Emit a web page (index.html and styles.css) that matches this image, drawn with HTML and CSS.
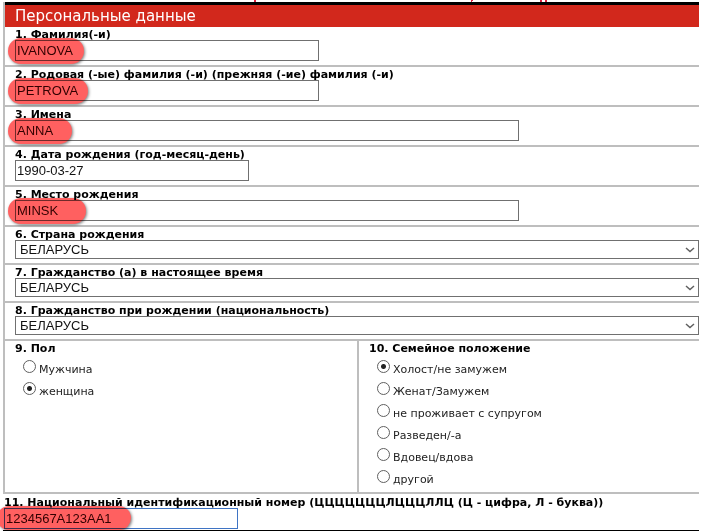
FILE: index.html
```html
<!DOCTYPE html>
<html lang="ru">
<head>
<meta charset="utf-8">
<title>Персональные данные</title>
<link rel="stylesheet" href="styles.css">
</head>
<body>
<svg class="specks" width="709" height="2" viewBox="0 0 709 2" aria-hidden="true">
  <path d="M254 0h2v2h-2zM471 0h2v1h-1v1h-1zM540 0h2v2h-2zM545 0h2v2h-2z"/>
</svg>
<form class="form">
  <section class="panel">
    <h1 class="title">Персональные данные</h1>
    <div class="row">
      <label class="label" for="surname">1. Фамилия(-и)</label>
      <div class="field mark mark-surname"><input class="text w-medium" id="surname" type="text" value="IVANOVA"></div>
    </div>
    <div class="row">
      <label class="label" for="birthname">2. Родовая (-ые) фамилия (-и) (прежняя (-ие) фамилия (-и)</label>
      <div class="field mark mark-birthname"><input class="text w-medium" id="birthname" type="text" value="PETROVA"></div>
    </div>
    <div class="row">
      <label class="label" for="names">3. Имена</label>
      <div class="field mark mark-names"><input class="text w-long" id="names" type="text" value="ANNA"></div>
    </div>
    <div class="row">
      <label class="label" for="birthdate">4. Дата рождения (год-месяц-день)</label>
      <div class="field"><input class="text w-short" id="birthdate" type="text" value="1990-03-27"></div>
    </div>
    <div class="row">
      <label class="label" for="birthplace">5. Место рождения</label>
      <div class="field mark mark-birthplace"><input class="text w-long" id="birthplace" type="text" value="MINSK"></div>
    </div>
    <div class="row">
      <label class="label" for="country">6. Страна рождения</label>
      <div class="field"><select class="select" id="country"><option>БЕЛАРУСЬ</option></select><svg class="chevron" width="10" height="6" viewBox="0 0 10 6"><path d="M1 1l4 3.5L9 1"/></svg></div>
    </div>
    <div class="row">
      <label class="label" for="citizenship">7. Гражданство (а) в настоящее время</label>
      <div class="field"><select class="select" id="citizenship"><option>БЕЛАРУСЬ</option></select><svg class="chevron" width="10" height="6" viewBox="0 0 10 6"><path d="M1 1l4 3.5L9 1"/></svg></div>
    </div>
    <div class="row">
      <label class="label" for="nationality">8. Гражданство при рождении (национальность)</label>
      <div class="field"><select class="select" id="nationality"><option>БЕЛАРУСЬ</option></select><svg class="chevron" width="10" height="6" viewBox="0 0 10 6"><path d="M1 1l4 3.5L9 1"/></svg></div>
    </div>
    <div class="choices">
      <fieldset class="group">
        <legend class="label">9. Пол</legend>
        <label class="option"><input type="radio" name="sex"><span>Мужчина</span></label>
        <label class="option"><input type="radio" name="sex" checked><span>женщина</span></label>
      </fieldset>
      <fieldset class="group">
        <legend class="label">10. Семейное положение</legend>
        <label class="option"><input type="radio" name="marital" checked><span>Холост/не замужем</span></label>
        <label class="option"><input type="radio" name="marital"><span>Женат/Замужем</span></label>
        <label class="option"><input type="radio" name="marital"><span>не проживает с супругом</span></label>
        <label class="option"><input type="radio" name="marital"><span>Разведен/-а</span></label>
        <label class="option"><input type="radio" name="marital"><span>Вдовец/вдова</span></label>
        <label class="option"><input type="radio" name="marital"><span>другой</span></label>
      </fieldset>
    </div>
  </section>
  <div class="identity">
    <label class="label" for="idnumber">11. Национальный идентификационный номер (ЦЦЦЦЦЦЦЛЦЦЦЛЛЦ (Ц - цифра, Л - буква))</label>
    <div class="field mark mark-id"><input class="text text-active w-short" id="idnumber" type="text" value="1234567A123AA1"></div>
  </div>
</form>
</body>
</html>
```
FILE: styles.css
```css
* {
  box-sizing: border-box;
}

body {
  margin: 0;
  background: #fff;
  color: #000;
  font-family: Verdana, "DejaVu Sans", sans-serif;
  font-size: 11px;
  overflow: hidden;
}

.specks {
  display: block;
  fill: #d8203c;
}

.form {
  margin: 0 10px 0 3px;
}

.panel {
  border-left: 2px solid #bebebe;
}

.title {
  margin: 0;
  padding-left: 10px;
  border-top: 3px solid #000;
  background: #d2281c;
  color: #fff;
  font-size: 15px;
  font-weight: 400;
  line-height: 22px;
}

.row {
  padding: 0 0 4px 10px;
  border-bottom: 2px solid #bebebe;
}

.label {
  display: block;
  height: 13px;
  padding: 0;
  font-size: 11px;
  font-weight: 700;
  line-height: 16px;
  white-space: nowrap;
}

.field {
  position: relative;
}

.text,
.select {
  display: block;
  margin: 0;
  border: 1px solid #707070;
  border-radius: 0;
  background: #fff;
  color: #111;
  font-family: "Liberation Sans", Arial, sans-serif;
  outline: 0;
}

.text {
  max-width: 100%;
  height: 21px;
  padding: 0 1px;
  font-size: 13px;
}

.text-active {
  border-color: #3f74c4;
}

.w-short {
  width: 234px;
}

.w-medium {
  width: 304px;
}

.w-long {
  width: 504px;
}

.select {
  width: 100%;
  height: 19px;
  padding: 0 4px;
  appearance: none;
  font-size: 13px;
}

.chevron {
  position: absolute;
  top: 7px;
  right: 4px;
  fill: none;
  stroke: #606060;
  stroke-width: 1.5;
  pointer-events: none;
}

/* Translucent marker laid over a filled-in value */
.mark::after {
  content: "";
  position: absolute;
  top: -2px;
  left: -7px;
  height: 26px;
  border-radius: 13px;
  background: #ff6060;
  box-shadow: 1px 1px 3px rgba(0, 0, 0, 0.5);
  mix-blend-mode: multiply;
  pointer-events: none;
}

.mark .text {
  color: #300;
}

.mark-surname::after {
  width: 76px;
}

.mark-birthname::after {
  width: 80px;
}

.mark-names::after {
  width: 64px;
}

.mark-birthplace::after {
  width: 78px;
}

.mark-id::after {
  width: 134px;
  height: 24px;
}

.choices {
  display: grid;
  grid-template-columns: 352px 1fr;
  border-bottom: 2px solid #bebebe;
}

.group {
  min-width: 0;
  margin: 0;
  padding: 0 0 4px 10px;
  border: 0;
}

.group + .group {
  border-left: 2px solid #bebebe;
}

.group .label {
  float: left;
  width: 100%;
  margin-bottom: 2px;
}

.option {
  display: flex;
  gap: 3px;
  clear: both;
  height: 22px;
  padding-left: 8px;
  line-height: 28px;
  color: #222;
}

.option input {
  appearance: none;
  flex: none;
  width: 13px;
  height: 13px;
  margin: 4px 0 0;
  border: 1px solid #606060;
  border-radius: 50%;
  background: #fff;
}

.option input:checked {
  background: radial-gradient(circle, #222 0 2px, #fff 3px);
}

.identity {
  padding: 1px 0 1px 1px;
  border-bottom: 1px solid #000;
}
```
